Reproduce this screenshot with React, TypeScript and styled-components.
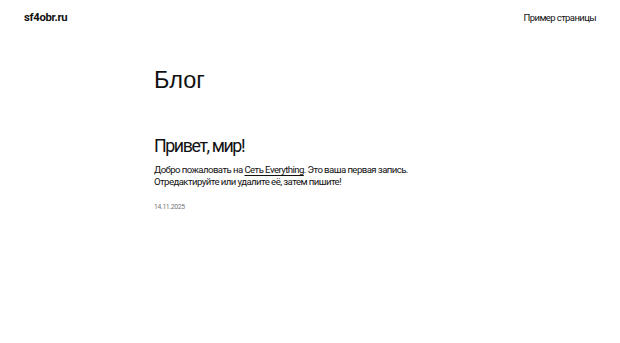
import React from 'react';
import styled, { createGlobalStyle } from 'styled-components';

const GlobalStyle = createGlobalStyle`
  html, body {
    margin: 0;
    padding: 0;
    background: #ffffff;
    color: #111111;
    font-family: Roboto, "Noto Sans", sans-serif;
  }
  * { box-sizing: border-box; }
`;

const Page = styled.div`
  width: 620px;
  min-height: 343px;
  background: #fff;
`;

const Header = styled.header`
  display: flex;
  align-items: center;
  justify-content: space-between;
  padding: 0 24px;
  height: 34px;
`;

const SiteTitle = styled.a`
  font-size: 11.3px;
  font-weight: 700;
  letter-spacing: -0.3px;
  color: #111;
  text-decoration: none;
`;

const NavLink = styled.a`
  font-size: 9.5px;
  letter-spacing: -0.6px;
  color: #111;
  text-decoration: none;
`;

const Main = styled.main`
  width: 312px;
  margin: 0 auto;
  padding-top: 30px;
`;

const PageTitle = styled.h1`
  margin: 0;
  font-family: "Liberation Sans", Arial, sans-serif;
  font-size: 23.5px;
  font-weight: 400;
  line-height: 32px;
`;

const Post = styled.article`
  margin-top: 38px;
`;

const PostTitle = styled.h2`
  margin: 0;
  font-size: 17.8px;
  font-weight: 400;
  line-height: 24px;
  letter-spacing: -1.4px;
`;

const Excerpt = styled.p`
  margin: 6px 0 0;
  font-size: 9.6px;
  line-height: 12px;
  letter-spacing: -0.56px;
  a {
    color: #111;
    text-decoration: underline;
    text-underline-offset: 1.5px;
  }
`;

const PostDate = styled.time`
  display: block;
  margin-top: 14.5px;
  font-size: 6.8px;
  letter-spacing: -0.35px;
  color: #777;
`;

export default function App() {
  return (
    <>
      <GlobalStyle />
      <Page>
        <Header>
          <SiteTitle href="#">sf4obr.ru</SiteTitle>
          <NavLink href="#">Пример страницы</NavLink>
        </Header>
        <Main>
          <PageTitle>Блог</PageTitle>
          <Post>
            <PostTitle>Привет, мир!</PostTitle>
            <Excerpt>
              Добро пожаловать на <a href="#">Сеть Everything</a>. Это ваша первая запись.
              <br />
              Отредактируйте или удалите её, затем пишите!
            </Excerpt>
            <PostDate>14.11.2025</PostDate>
          </Post>
        </Main>
      </Page>
    </>
  );
}
